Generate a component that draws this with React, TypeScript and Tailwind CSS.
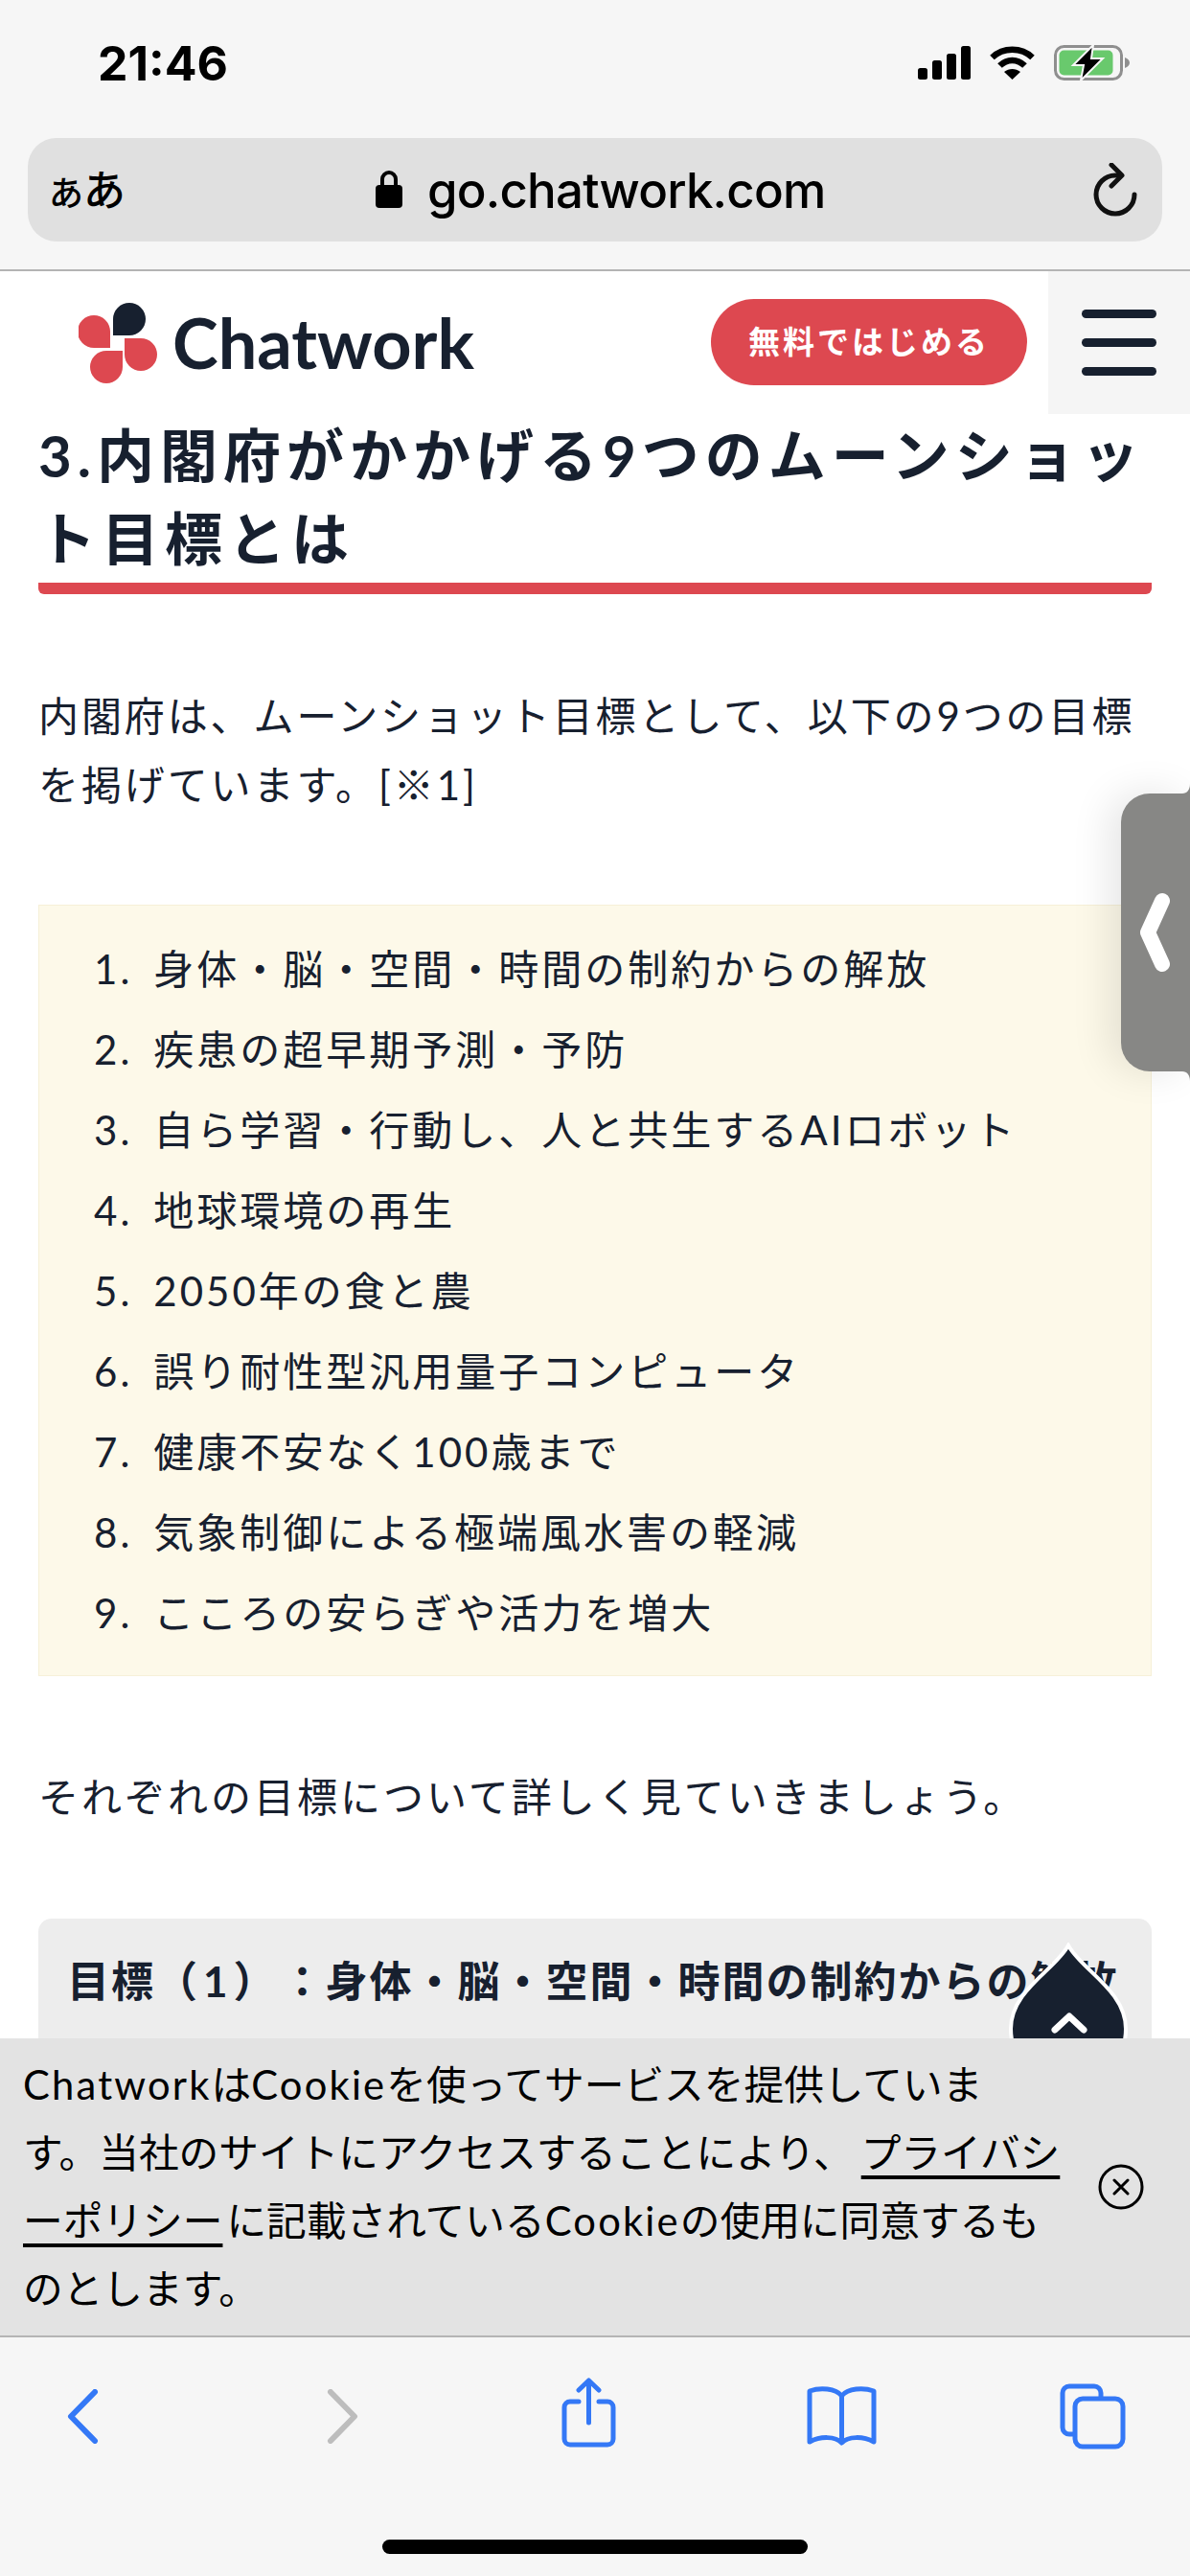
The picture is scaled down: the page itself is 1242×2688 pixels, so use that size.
import React from 'react';

const FONT = "font-['Lato','Noto_Sans_CJK_JP',sans-serif]";
const UI_FONT = "font-['Inter','Noto_Sans_CJK_JP',sans-serif]";

const goals = [
  '身体・脳・空間・時間の制約からの解放',
  '疾患の超早期予測・予防',
  '自ら学習・行動し、人と共生するAIロボット',
  '地球環境の再生',
  '2050年の食と農',
  '誤り耐性型汎用量子コンピュータ',
  '健康不安なく100歳まで',
  '気象制御による極端風水害の軽減',
  'こころの安らぎや活力を増大',
];

const Logo = () => (
  <svg width="82" height="86" viewBox="0 0 82 86" className="shrink-0">
    <path d="M33 48 H16 A17 17 0 1 1 33 31 Z" fill="#dd4850" />
    <path d="M36 35 V18 A17 17 0 1 1 53 35 Z" fill="#17202f" />
    <path d="M49 38 H65 A17 17 0 1 1 48 55 V38 Z" fill="#dd4850" />
    <path d="M46 51 V68 A17 17 0 1 1 29 51 Z" fill="#dd4850" />
  </svg>
);

const App = () => {
  return (
    <div className={`relative flex h-[2688px] w-[1242px] flex-col overflow-hidden bg-white [text-spacing-trim:space-all] ${FONT}`}>
      {/* safari top */}
      <div className="h-[283px] shrink-0 border-b-2 border-[#b4b4b4] bg-[#f6f6f6] px-[29px]">
        <div className="flex h-[144px] items-center justify-between pb-[13px] pl-[73px] pr-[34px]">
          <span className={`text-[50px] font-bold leading-none text-black ${UI_FONT}`}>21:46</span>
          <div className="flex items-center gap-[20px]">
            <svg width="55" height="35" viewBox="0 0 55 35">
              <rect x="0" y="23" width="10" height="12" rx="2.500" fill="#000" />
              <rect x="15" y="15" width="10" height="20" rx="2.500" fill="#000" />
              <rect x="30" y="8" width="10" height="27" rx="2.500" fill="#000" />
              <rect x="45" y="0" width="10" height="35" rx="2.500" fill="#000" />
            </svg>
            <svg width="47" height="35" viewBox="0 0 47 35" fill="none" stroke="#000" strokeWidth="6.500">
              <path d="M2.500 12 C14 1 33 1 44.500 12" />
              <path d="M10.500 20.500 C18 13 29 13 36.500 20.500" />
              <path d="M23.500 35 L15 27 C20 23 27 23 32 27 Z" fill="#000" stroke="none" />
            </svg>
            <svg width="79" height="39" viewBox="0 0 79 39">
              <rect x="1.500" y="2.500" width="69" height="34" rx="9" fill="none" stroke="#8f8f8f" strokeWidth="3" />
              <rect x="5.500" y="6.500" width="56" height="26" rx="5" fill="#69c96d" />
              <path d="M74 14 C77 15 79 17 79 19.500 C79 22 77 24 74 25 Z" fill="#8f8f8f" />
              <path d="M41 1 L20 22 H31 L28 38 L51 15 H39 Z" fill="#000" stroke="#f6f6f6" strokeWidth="2" />
            </svg>
          </div>
        </div>
        <div className="flex h-[108px] items-center rounded-[30px] bg-[#e0e0e0] pl-[22px] pr-[26px]">
          <span className="w-[341px] text-[44px] font-medium leading-none text-black">
            <span className="text-[36px]">あ</span>あ
          </span>
          <div className="flex items-center gap-[26px]">
            <svg width="28" height="40" viewBox="0 0 28 40" className="-mt-[3px]">
              <path d="M7 18 V10 a7 7 0 0 1 14 0 V18" fill="none" stroke="#000" strokeWidth="4" />
              <rect x="0" y="16" width="28" height="24" rx="4" fill="#000" />
            </svg>
            <span className={`text-[51px] font-medium leading-none tracking-[-0.8px] text-black ${UI_FONT}`}>go.chatwork.com</span>
          </div>
          <svg width="46" height="56" viewBox="0 0 46 56" fill="none" stroke="#111" strokeWidth="5" strokeLinecap="round" strokeLinejoin="round" className="ml-auto">
            <path d="M26 13 H23 A20 20 0 1 0 43 33" />
            <path d="M19 2 L30 13 L19 24" />
          </svg>
        </div>
      </div>

      {/* site header */}
      <header className="flex h-[149px] shrink-0 items-stretch justify-between pl-[82px]">
        <div className="flex items-center gap-[16px]">
          <Logo />
          <span className="-mt-[2px] text-[72px] font-bold leading-none text-[#17202f]">Chatwork</span>
        </div>
        <div className="flex items-stretch gap-[22px]">
          <div className="flex items-center pb-[2px]">
            <div className="flex h-[90px] w-[330px] items-center justify-center rounded-full bg-[#dd4850] text-[33px] font-bold tracking-[3px] text-white">
              無料ではじめる
            </div>
          </div>
          <div className="flex w-[148px] flex-col items-center justify-center gap-[21px] bg-[#f5f5f5]">
            <div className="h-[9px] w-[78px] rounded-full bg-[#17202f]" />
            <div className="h-[9px] w-[78px] rounded-full bg-[#17202f]" />
            <div className="h-[9px] w-[78px] rounded-full bg-[#17202f]" />
          </div>
        </div>
      </header>

      {/* article, clipped by the bars below */}
      <main className="min-h-0 flex-1 overflow-hidden px-[40px] text-[#17202f]">
        <h2 className="border-b-[12px] border-[#dd4850] pb-[2px] text-[60px] font-bold leading-[87px] tracking-[6px] [border-radius:6px]">
          3.内閣府がかかげる9つのムーンショット目標とは
        </h2>
        <p className="mt-[91px] text-[42px] leading-[72px] tracking-[2.9px]">
          内閣府は、ムーンショット目標として、以下の9つの目標を掲げています。[※1]
        </p>
        <ol className="mt-[89px] flex h-[805px] flex-col justify-center border border-[#f6f0d8] bg-[#fdf9e9] pl-[57px] text-[42px] leading-[84px] tracking-[3px]">
          {goals.map((g, i) => (
            <li key={i} className="flex gap-[22px]">
              <span>{i + 1}.</span>
              <span>{g}</span>
            </li>
          ))}
        </ol>
        <p className="mt-[90px] text-[42px] leading-[72px] tracking-[3px]">
          それぞれの目標について詳しく見ていきましょう。
        </p>
        <div className="mt-[91px] rounded-[14px] bg-[#ededed] pb-[40px] pl-[30px] pr-[20px] pt-[29px] text-[44px] font-bold leading-[72px] tracking-[2px]">
          目標<span className="tracking-[6px]">（1）</span>：身体・脳・空間・時間の制約からの解放
        </div>
      </main>

      {/* cookie notice */}
      <div className="flex h-[310px] shrink-0 items-center bg-[#e3e3e3] pl-[24px] pr-[48px] text-black">
        <p className="w-[1100px] text-[41.700px] leading-[71px]">
          <span className="tracking-[2.200px]">Chatwork</span>は<span className="tracking-[2.200px]">Cookie</span>を使ってサービスを提供していま
          <br />
          す。当社のサイトにアクセスすることにより、
          <span className="ml-[8px] underline underline-offset-[8px]">
            プライバシ
            <br />
            ーポリシー
          </span>
          <span className="ml-[4px]">に記載されている</span>
          <span className="tracking-[2.200px]">Cookie</span>の使用に同意するも
          <br />
          のとします。
        </p>
        <svg width="48" height="48" viewBox="0 0 48 48" fill="none" stroke="#000" strokeWidth="3" className="ml-auto">
          <circle cx="24" cy="24" r="22" />
          <path d="M17 17 L31 31 M31 17 L17 31" strokeLinecap="round" />
        </svg>
      </div>

      {/* safari toolbar */}
      <div className="relative h-[251px] shrink-0 border-t-2 border-[#b4b4b4] bg-[#f6f6f6]">
        <div className="flex h-[164px] items-center pl-[70px]">
          <svg width="33" height="57" viewBox="0 0 33 57" fill="none" stroke="#3478f6" strokeWidth="6" strokeLinecap="round" strokeLinejoin="round">
            <path d="M29 3 L4 28.500 L29 54" />
          </svg>
          <svg width="33" height="57" viewBox="0 0 33 57" fill="none" stroke="#bdbdbd" strokeWidth="6" strokeLinecap="round" strokeLinejoin="round" className="ml-[238px]">
            <path d="M4 3 L29 28.500 L4 54" />
          </svg>
          <svg width="57" height="73" viewBox="0 0 57 73" fill="none" stroke="#3478f6" strokeWidth="5" strokeLinecap="round" strokeLinejoin="round" className="mb-[7px] ml-[212px]">
            <path d="M18 25 H9 A6 6 0 0 0 3 31 V64 A6 6 0 0 0 9 70 H48 A6 6 0 0 0 54 64 V31 A6 6 0 0 0 48 25 H39" />
            <path d="M28.500 47 V3 M18 13 L28.500 3 L39 13" />
          </svg>
          <svg width="73" height="62" viewBox="0 0 73 62" fill="none" stroke="#3478f6" strokeWidth="5" strokeLinecap="round" strokeLinejoin="round" className="ml-[199px]">
            <path d="M36.500 10 C30 2 14 1 3 5 V58 C14 52 30 52 36.500 59 C43 52 59 52 70 58 V5 C59 1 43 2 36.500 10 Z" />
            <path d="M36.500 10 V58" />
          </svg>
          <svg width="69" height="69" viewBox="0 0 69 69" fill="none" stroke="#3478f6" strokeWidth="5" strokeLinejoin="round" className="ml-[191px]">
            <path d="M14 53 H10 A7 7 0 0 1 3 46 V10 A7 7 0 0 1 10 3 H36 A7 7 0 0 1 43 10 V14" />
            <rect x="16" y="16" width="50" height="50" rx="8" />
          </svg>
        </div>
        <div className="absolute bottom-[23px] left-1/2 h-[15px] w-[444px] -translate-x-1/2 rounded-full bg-black" />
      </div>

      {/* side tab */}
      <div className="absolute left-[1170px] top-[828px] flex h-[290px] w-[72px] items-center rounded-l-[30px] bg-[#878785] pl-[20px] shadow-[-12px_0_40px_rgba(0,0,0,0.1)]">
        <svg width="32" height="84" viewBox="0 0 32 84" fill="none" stroke="#fff" strokeWidth="16" strokeLinecap="round" strokeLinejoin="round">
          <path d="M23 9 L8 42 L23 75" />
        </svg>
        <svg width="8" height="10" viewBox="0 0 8 10" className="absolute right-0 top-[-10px]">
          <path d="M8 0 C8 6 5 10 0 10 H8 Z" fill="#878785" />
        </svg>
        <svg width="8" height="10" viewBox="0 0 8 10" className="absolute bottom-[-10px] right-0">
          <path d="M8 10 C8 4 5 0 0 0 H8 Z" fill="#878785" />
        </svg>
      </div>

      {/* scroll to top */}
      <div className="absolute left-[1050px] top-[2027px] h-[100px] w-[130px] overflow-hidden">
        <svg width="130" height="130" viewBox="0 0 130 130">
          <path d="M65 3 C78 28 125 50 125 90 A60 60 0 0 1 5 90 C5 50 52 28 65 3 Z" fill="#17202f" stroke="#fff" strokeWidth="4" />
          <path d="M51 91 L66 77 L81 91" fill="none" stroke="#fff" strokeWidth="7" strokeLinecap="round" strokeLinejoin="round" />
        </svg>
      </div>
    </div>
  );
};

export default App;
